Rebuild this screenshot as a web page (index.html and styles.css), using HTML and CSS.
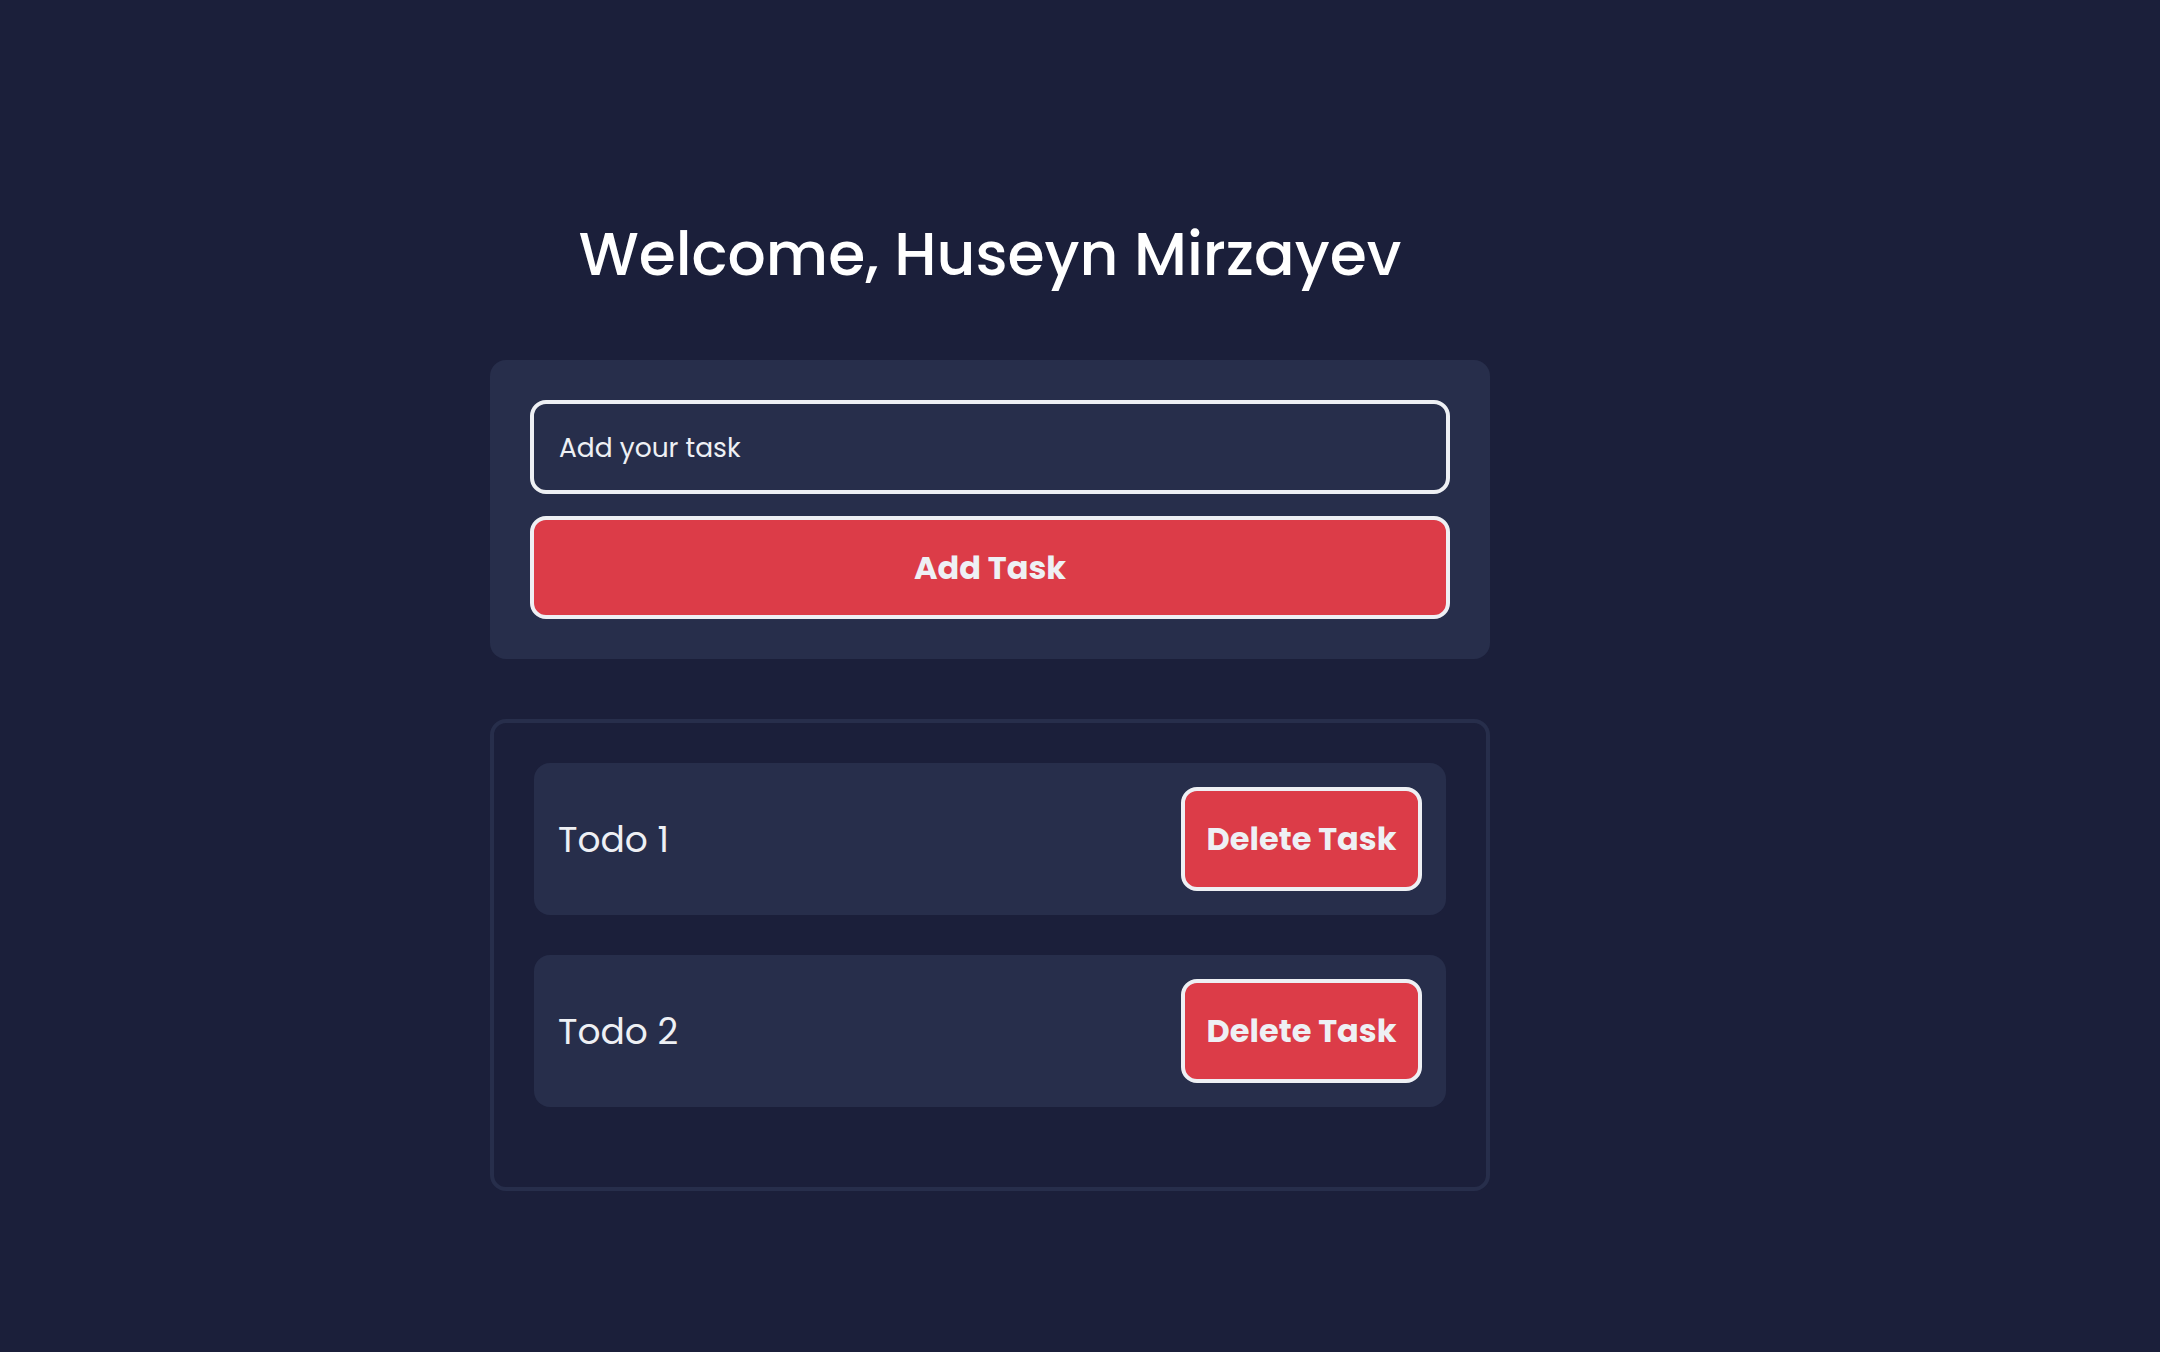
FILE: index.html
```html
<!DOCTYPE html>
<html lang="en">
<head>
<meta charset="utf-8">
<title>Todo</title>
<link rel="stylesheet" href="styles.css">
</head>
<body>
<main class="page">
  <h1 class="title">Welcome, Huseyn Mirzayev</h1>
  <section class="add-card">
    <input class="task-input" type="text" placeholder="Add your task">
    <button class="add-btn" type="button">Add Task</button>
  </section>
  <section class="todo-list">
    <div class="todo-item">
      <span class="todo-text">Todo 1</span>
      <button class="delete-btn" type="button">Delete Task</button>
    </div>
    <div class="todo-item">
      <span class="todo-text">Todo 2</span>
      <button class="delete-btn" type="button">Delete Task</button>
    </div>
  </section>
</main>
</body>
</html>
```
FILE: styles.css
```css
* { box-sizing: border-box; }

html, body {
  margin: 0;
  min-height: 100%;
  background: #1b1f3a;
}

body {
  font-family: "Poppins", "Inter", "Open Sans", sans-serif;
  color: #eef0f4;
  min-height: 1352px;
}

.page {
  width: 1000px;
  margin-left: 490px;
  padding-top: 218px;
}

.title {
  margin: 0 0 70px;
  font-size: 60px;
  font-weight: 500;
  line-height: 1.2;
  text-align: center;
  color: #ffffff;
}

.add-card {
  background: #272e4b;
  border-radius: 16px;
  padding: 40px;
  display: flex;
  flex-direction: column;
  gap: 22px;
}

.task-input {
  height: 94px;
  width: 100%;
  background: #272e4b;
  border: 4px solid #eef0f4;
  border-radius: 16px;
  padding: 2px 25px 0;
  font-family: inherit;
  font-size: 26.5px;
  color: #eef0f4;
  outline: none;
}

.task-input::placeholder {
  color: #eef0f4;
  opacity: 1;
}

.add-btn {
  height: 103px;
  width: 100%;
  background: #dc3c48;
  border: 4px solid #eef0f4;
  border-radius: 16px;
  font-family: inherit;
  font-size: 32px;
  font-weight: 700;
  color: #eef0f4;
}

.todo-list {
  margin-top: 60px;
  border: 4px solid #272e4b;
  border-radius: 16px;
  padding: 40px;
}

.todo-item {
  background: #272e4b;
  border-radius: 16px;
  padding: 24px;
  margin-bottom: 40px;
  display: flex;
  align-items: center;
  justify-content: space-between;
}

.todo-text {
  font-size: 36px;
  font-weight: 400;
  color: #eef0f4;
}

.delete-btn {
  width: 241px;
  height: 104px;
  background: #dc3c48;
  border: 4px solid #eef0f4;
  border-radius: 16px;
  font-family: inherit;
  font-size: 32px;
  font-weight: 700;
  color: #eef0f4;
  padding: 0;
}
```
